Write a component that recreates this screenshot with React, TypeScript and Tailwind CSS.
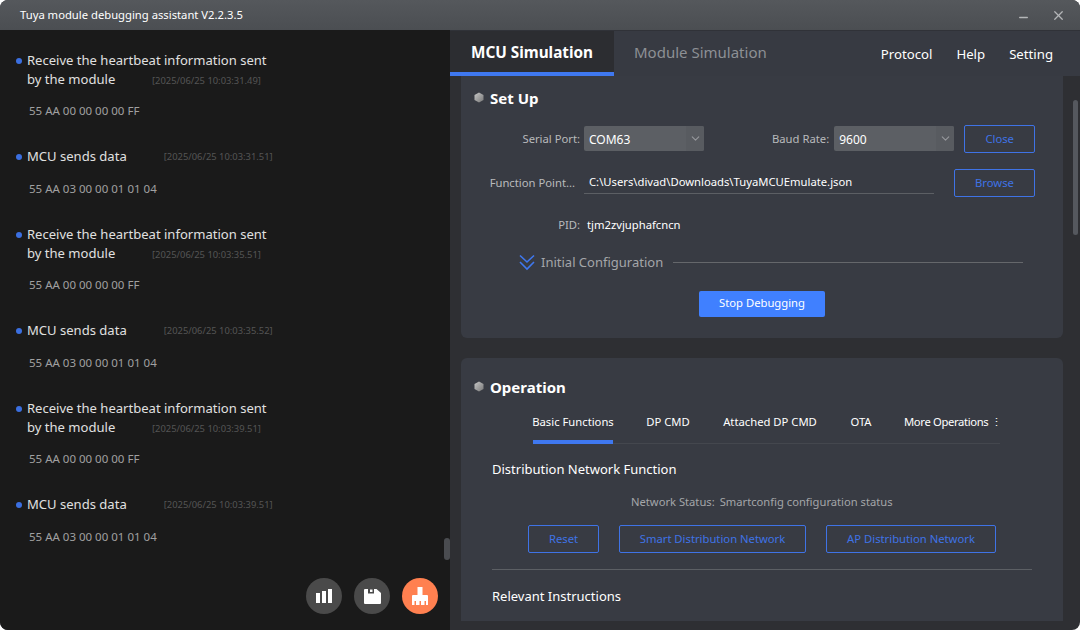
import { ChevronDown, Minus, X } from "lucide-react";

const font = "font-['Noto_Sans','Liberation_Sans',sans-serif]";

const logs = [
  { lines: ["Receive the heartbeat information sent", "by the module"], time: "[2025/06/25 10:03:31.49]", data: "55 AA 00 00 00 00 FF" },
  { lines: ["MCU sends data"], time: "[2025/06/25 10:03:31.51]", data: "55 AA 03 00 00 01 01 04" },
  { lines: ["Receive the heartbeat information sent", "by the module"], time: "[2025/06/25 10:03:35.51]", data: "55 AA 00 00 00 00 FF" },
  { lines: ["MCU sends data"], time: "[2025/06/25 10:03:35.52]", data: "55 AA 03 00 00 01 01 04" },
  { lines: ["Receive the heartbeat information sent", "by the module"], time: "[2025/06/25 10:03:39.51]", data: "55 AA 00 00 00 00 FF" },
  { lines: ["MCU sends data"], time: "[2025/06/25 10:03:39.51]", data: "55 AA 03 00 00 01 01 04" },
];

function LogEntry({ lines, time, data }: { lines: string[]; time: string; data: string }) {
  const single = lines.length === 1;
  return (
    <div className="flex flex-col">
      <div className="flex h-[19px] items-center text-[13.050px] text-[#e0e0e0]">
        <span className="ml-[16px] mr-[5px] size-[6px] rounded-full bg-[#3b6fe0]" />
        <span>{lines[0]}</span>
        {single ? <span className="ml-[37px] mt-[2px] text-[9.400px] text-[#555]">{time}</span> : null}
      </div>
      {single ? null : (
        <div className="flex h-[19px] items-center pl-[27px] text-[13.050px] text-[#e0e0e0]">
          <span className="w-[125px]">{lines[1]}</span>
          <span className="mt-[3px] text-[9.400px] text-[#555]">{time}</span>
        </div>
      )}
      <div className={`flex h-[16px] items-center pl-[29px] text-[11.500px] text-[#a0a0a0] ${single ? "mt-[15px] mb-[28px]" : "mt-[14px] mb-[28px]"}`}>
        {data}
      </div>
    </div>
  );
}

function SectionTitle({ title }: { title: string }) {
  return (
    <div className="flex items-center gap-[6px] pl-[13px] text-[15px] font-bold text-white">
      <svg width="10" height="11" viewBox="0 0 10 11" className="-mt-[2px]">
        <defs>
          <linearGradient id="hex" x1="0" y1="0" x2="1" y2="1">
            <stop offset="0" stopColor="#c8c8c8" />
            <stop offset="1" stopColor="#777" />
          </linearGradient>
        </defs>
        <path d="M5 0.5 9.5 3v5L5 10.500.5 8V3z" fill="url(#hex)" />
      </svg>
      <span>{title}</span>
    </div>
  );
}

function Select({ value }: { value: string }) {
  return (
    <div className="flex h-[25px] w-[120px] items-center justify-between overflow-hidden rounded-[2px] bg-[#5c5f64] pl-[5px] text-[12px] text-white">
      <span className="pt-[2px]">{value}</span>
      <div className="flex h-full w-[18px] items-center justify-center bg-[#585b60]">
        <ChevronDown size={13} className="text-[#96989c]" />
      </div>
    </div>
  );
}

function OutlineButton({ label, className }: { label: string; className: string }) {
  return (
    <button type="button" className={`flex h-[28px] items-center justify-center rounded-[2px] border border-[#3f73e6] pt-[1px] text-[11.250px] text-[#3f73e6] ${className}`}>
      {label}
    </button>
  );
}

function BarsIcon() {
  return (
    <svg width="16" height="14" viewBox="0 0 16 14" fill="#fff">
      <rect x="0" y="4" width="4" height="10" />
      <rect x="6" y="2" width="4" height="12" />
      <rect x="12" y="0" width="4" height="14" />
    </svg>
  );
}

function SaveIcon() {
  return (
    <svg width="17" height="15" viewBox="0 0 17 15" fill="#fff">
      <path d="M1 0h3v4.500h6V0h2.500L17 4v10a1 1 0 0 1-1 1H1a1 1 0 0 1-1-1V1a1 1 0 0 1 1-1z" />
      <rect x="6" y="0.500" width="2.500" height="2.500" />
    </svg>
  );
}

function BroomIcon() {
  return (
    <svg width="16" height="18" viewBox="0 0 16 18" fill="#fff">
      <path d="M5.500 0h5v8H15a1 1 0 0 1 1 1v9h-2v-4h-1.500v4H9v-4H7.500v4H4v-4H2.500v4H0V9a1 1 0 0 1 1-1h4.500z" />
    </svg>
  );
}

function DoubleChevron() {
  return (
    <svg width="16" height="17" viewBox="0 0 16 17" fill="none" stroke="#3f78f0" strokeWidth="1.600">
      <path d="M1 1.500 8 8l7-6.500" />
      <path d="M1 8 8 15l7-7" />
    </svg>
  );
}

function RoundButton({ className, children }: { className: string; children: React.ReactNode }) {
  return <div className={`flex size-[36px] items-center justify-center rounded-full ${className}`}>{children}</div>;
}

export default function App() {
  return (
    <div className={`flex h-[630px] w-[1080px] flex-col overflow-hidden rounded-[8px] bg-[#2e2f33] ${font}`}>
      <header className="flex h-[30px] shrink-0 items-center justify-between bg-gradient-to-b from-[#55585c] to-[#4b4e52] pl-[20px] pr-[14px] text-[11.250px] text-white">
        <span>Tuya module debugging assistant V2.2.3.5</span>
        <div className="flex items-center gap-[21px] text-[#b4b6b8]">
          <Minus size={13} strokeWidth={2.500} className="mt-[5px]" />
          <X size={15} strokeWidth={2} />
        </div>
      </header>

      <div className="flex min-h-0 flex-1">
        <aside className="relative w-[450px] shrink-0 overflow-hidden bg-[#1a1a1a] pt-[21px]">
          {logs.map((log, index) => (
            <LogEntry key={index} {...log} />
          ))}
          <div className="absolute right-0 top-[508px] h-[22px] w-[6px] rounded-[3px] bg-[#4a4c50]" />
          <div className="absolute bottom-[16px] right-[12px] flex gap-[12px]">
            <RoundButton className="bg-[#4a4a4a]"><BarsIcon /></RoundButton>
            <RoundButton className="bg-[#4a4a4a]"><SaveIcon /></RoundButton>
            <RoundButton className="bg-[#ff8050]"><BroomIcon /></RoundButton>
          </div>
        </aside>

        <main className="relative flex min-w-0 flex-1 flex-col">
          <nav className="flex h-[46px] shrink-0 items-stretch border-t border-[#303238] bg-[#373a42]">
            <div className="flex w-[164px] items-center justify-center border-b-[4px] border-[#3f78f0] bg-[#2c2d31] pt-[1px] text-[15.300px] font-bold text-white">
              MCU Simulation
            </div>
            <div className="flex items-center pb-[2px] pl-[20px] text-[15px] text-[#8d9095]">Module Simulation</div>
            <div className="ml-auto flex items-center gap-[24px] pr-[27px] pt-[3px] text-[13.200px] text-white">
              <span>Protocol</span>
              <span>Help</span>
              <span>Setting</span>
            </div>
          </nav>

          <div className="flex min-h-0 flex-1 flex-col gap-[20px] pl-[11px] pr-[17px]">
            <section className="h-[262px] shrink-0 rounded-b-[6px] bg-[#383b43] pt-[11px]">
              <SectionTitle title="Set Up" />
              <div className="mt-[15px] flex h-[28px] items-center text-[11.250px] text-[#b8babc]">
                <span className="w-[119px] pt-[2px] text-right">Serial Port:</span>
                <div className="ml-[4px]"><Select value="COM63" /></div>
                <span className="ml-[68px] pt-[2px]">Baud Rate:</span>
                <div className="ml-[5px]"><Select value="9600" /></div>
                <OutlineButton label="Close" className="ml-[10px] w-[71px]" />
              </div>
              <div className="mt-[16px] flex h-[28px] items-center text-[11.250px] text-[#b8babc]">
                <span className="w-[114px] pt-[1px] text-right">Function Point...</span>
                <div className="ml-[9px] -mt-[1px] flex h-[24px] w-[350px] items-center border-b border-[#5c5f64] pl-[5px] pt-[2px] text-white">
                  C:\Users\divad\Downloads\TuyaMCUEmulate.json
                </div>
                <OutlineButton label="Browse" className="ml-[20px] w-[81px]" />
              </div>
              <div className="mt-[20px] flex h-[18px] items-center text-[11.250px] text-[#b8babc]">
                <span className="w-[119px] text-right">PID:</span>
                <span className="ml-[7px] text-white">tjm2zvjuphafcncn</span>
              </div>
              <div className="ml-[58px] mt-[18px] flex h-[20px] items-center">
                <DoubleChevron />
                <span className="ml-[6px] text-[13px] text-[#a4a6a9]">Initial Configuration</span>
                <div className="ml-[10px] h-px w-[350px] bg-[#65676b]" />
              </div>
              <button type="button" className="mx-auto mt-[18px] flex h-[26px] w-[126px] items-center justify-center rounded-[2px] bg-[#4080ff] text-[11.250px] text-white">
                Stop Debugging
              </button>
            </section>

            <section className="h-[263px] shrink-0 rounded-t-[6px] bg-[#383b43] pt-[18px]">
              <SectionTitle title="Operation" />
              <div className="ml-[72px] mt-[13px] flex h-[32px] w-[467px] items-start gap-[32px] whitespace-nowrap border-b border-[#44474e] text-[11.250px] text-white">
                <span className="mr-[1px] flex h-[32px] w-[80px] justify-center border-b-[4px] border-[#3f78f0] pt-[2px]">Basic Functions</span>
                <span className="flex w-[44px] justify-center pt-[2px]">DP CMD</span>
                <span className="flex w-[96px] justify-center pt-[2px]">Attached DP CMD</span>
                <span className="flex w-[22px] justify-center pt-[2px]">OTA</span>
                <span className="w-[96px] pt-[2px] tracking-[-0.35px]">More Operations ⋮</span>
              </div>
              <div className="ml-[31px] mt-[16px] text-[13px] text-white">Distribution Network Function</div>
              <div className="mt-[15px] flex gap-[5px] pl-[170px] text-[11.200px] text-[#a4a6a9]">
                <span>Network Status:</span>
                <span>Smartconfig configuration status</span>
              </div>
              <div className="ml-[67px] mt-[14px] flex gap-[20px]">
                <OutlineButton label="Reset" className="w-[71px]" />
                <OutlineButton label="Smart Distribution Network" className="w-[187px]" />
                <OutlineButton label="AP Distribution Network" className="w-[170px]" />
              </div>
              <div className="ml-[31px] mt-[16px] h-px w-[540px] bg-[#5c5f64]" />
              <div className="ml-[31px] mt-[17px] text-[13px] text-white">Relevant Instructions</div>
            </section>
          </div>

          <div className="absolute right-[2px] top-[70px] h-[135px] w-[5px] rounded-[3px] bg-[#55585e]" />
        </main>
      </div>
    </div>
  );
}
